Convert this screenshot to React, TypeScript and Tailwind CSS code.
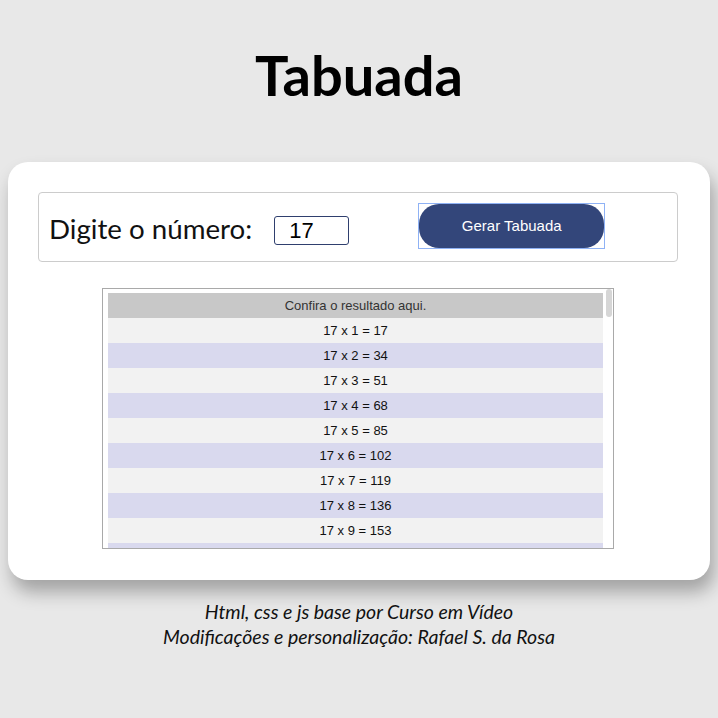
import React from 'react';

const numero = 17;
const linhas = Array.from({ length: 10 }, (_, i) => i + 1);

export default function App() {
    return (
        <div className="min-h-screen w-full bg-[#e8e8e8] pt-[41px] flex flex-col items-center">
            <h1 className="h-[67px] leading-[67px] text-[56px] font-bold text-black font-['Lato',sans-serif]">Tabuada</h1>

            {/* Cartão principal */}
            <main className="mt-[54px] w-[702px] bg-white rounded-[20px] pt-[30px] pb-[31px] pl-[30px] pr-[32px] shadow-[4px_12px_18px_rgba(0,0,0,0.3)]">
                <section className="h-[70px] w-[640px] border border-[#cccccc] rounded-[4px] flex items-center pl-[10px]">
                    <label className="text-[27.7px] text-[#111] font-['Lato',sans-serif] mt-[4px]">Digite o número:</label>
                    <input
                        type="number"
                        defaultValue={numero}
                        className="ml-[22px] mt-[6px] w-[75px] h-[29px] border border-[#2f3f6e] rounded-[3px] pl-[14px] text-[22px] text-black font-['Liberation_Sans',Arial,sans-serif] outline-none [appearance:textfield] [&::-webkit-inner-spin-button]:appearance-none"
                    />
                    <span className="ml-[69px] -mt-[2px] border border-[#8fb2f5] p-0">
                        <button className="block w-[185px] h-[44px] rounded-[20px] bg-[#33467a] text-white text-[15px] font-['Liberation_Sans',Arial,sans-serif]">
                            Gerar Tabuada
                        </button>
                    </span>
                </section>

                {/* Resultado */}
                <div className="relative mt-[26px] ml-[64px] w-[512px] h-[261px] border border-[#a9a9a9] overflow-hidden">
                    <div className="pt-[4px] pl-[5px] pr-[10px] font-['Liberation_Sans',Arial,sans-serif] text-[13px]">
                        <div className="h-[25px] bg-[#c8c8c8] text-[#333] flex items-center justify-center">Confira o resultado aqui.</div>
                        {linhas.map((n) => (
                            <div
                                key={n}
                                className={`h-[25px] flex items-center justify-center text-[#111] ${n % 2 === 0 ? 'bg-[#d9d9ee]' : 'bg-[#f2f2f2]'}`}
                            >
                                {numero} x {n} = {numero * n}
                            </div>
                        ))}
                    </div>
                    <div className="absolute right-[1px] top-[0px] w-[6px] h-[28px] rounded-[3px] bg-[#d6d6d6]" />
                </div>
            </main>

            <footer className="mt-[19px] text-center italic text-[19.5px] leading-[25px] text-[#111] font-['Lato',sans-serif]">
                <p>Html, css e js base por Curso em Vídeo</p>
                <p>Modificações e personalização: Rafael S. da Rosa</p>
            </footer>
        </div>
    );
}
